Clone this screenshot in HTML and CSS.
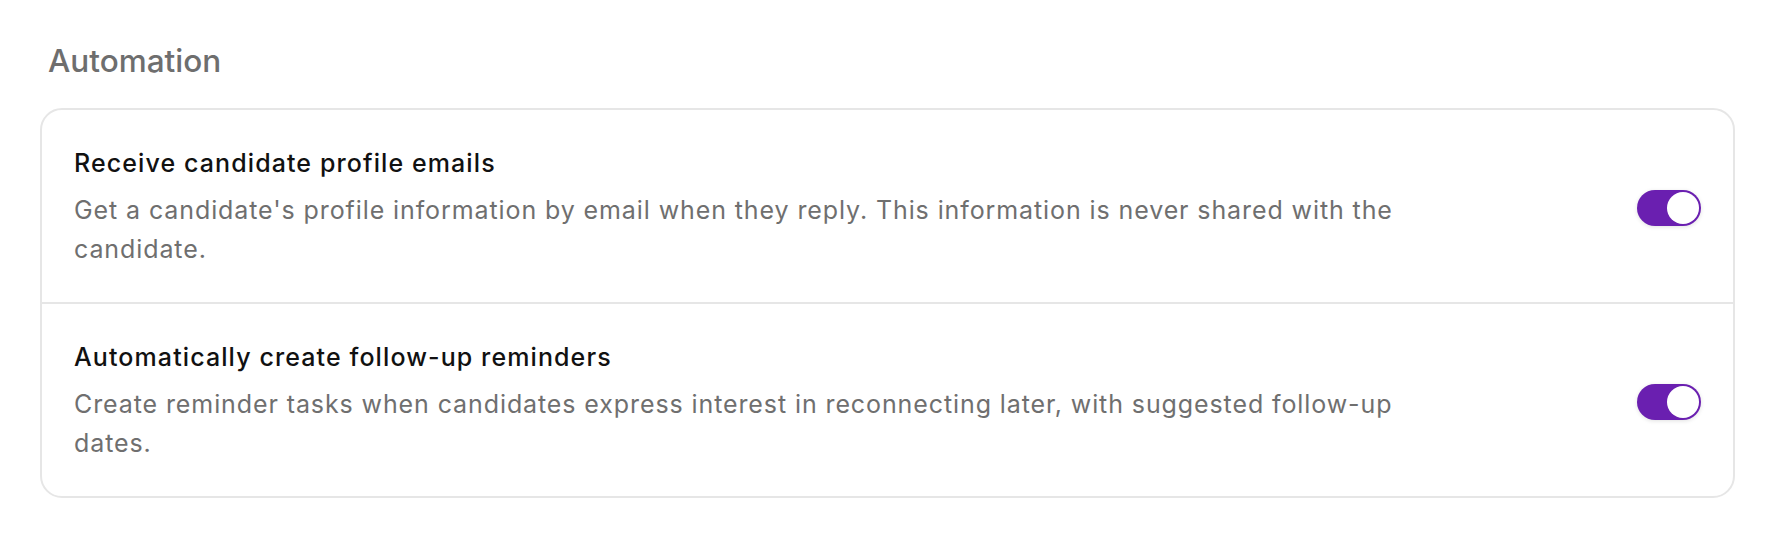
FILE: index.html
```html
<!DOCTYPE html>
<html lang="en">
<head>
    <meta charset="UTF-8">
    <meta name="viewport" content="width=device-width, initial-scale=1.0">
    <title>Automation settings</title>
    <link rel="stylesheet" href="styles.css">
</head>
<body>
    <div class="settings">
        <h2 class="section-title">Automation</h2>
        <div class="card">
            <div class="setting-row">
                <div class="setting-text">
                    <h3>Receive candidate profile emails</h3>
                    <p>Get a candidate's profile information by email when they reply. This information is never shared with the candidate.</p>
                </div>
                <label class="toggle">
                    <input type="checkbox" checked>
                    <span class="slider"></span>
                </label>
            </div>
            <div class="setting-row">
                <div class="setting-text">
                    <h3>Automatically create follow-up reminders</h3>
                    <p>Create reminder tasks when candidates express interest in reconnecting later, with suggested follow-up dates.</p>
                </div>
                <label class="toggle">
                    <input type="checkbox" checked>
                    <span class="slider"></span>
                </label>
            </div>
        </div>
    </div>
</body>
</html>
```

FILE: styles.css
```css
body {
    font-family: Inter, "Noto Sans", Arial, sans-serif;
    margin: 0;
    padding: 0;
    background-color: #fff;
}
.settings {
    padding: 43px 33px 40px 40px;
}
.section-title {
    margin: 0 0 29px 8px;
    font-size: 31.5px;
    line-height: 36px;
    font-weight: 500;
    color: #6e6e6e;
}
.card {
    border: 2px solid #e6e6e6;
    border-radius: 22px;
    background-color: #fff;
}
.setting-row {
    display: flex;
    align-items: center;
    justify-content: space-between;
    padding: 37px 32px 33.5px;
}
.setting-row + .setting-row {
    border-top: 2px solid #e6e6e6;
}
.setting-text {
    max-width: 1366px;
}
.setting-text h3 {
    margin: 0 0 11.5px;
    font-size: 25px;
    line-height: 32px;
    letter-spacing: 1.1px;
    font-weight: 500;
    color: #111;
}
.setting-text p {
    margin: 0;
    font-size: 25px;
    line-height: 39px;
    letter-spacing: 0.9px;
    color: #6f6f6f;
}
.toggle {
    position: relative;
    flex-shrink: 0;
    width: 64px;
    height: 36px;
}
.toggle input {
    opacity: 0;
    width: 0;
    height: 0;
}
.slider {
    position: absolute;
    inset: 0;
    background-color: #6a1fb0;
    border-radius: 18px;
    box-shadow: 0 1px 4px rgba(0, 0, 0, 0.12);
    cursor: pointer;
}
.slider::before {
    content: "";
    position: absolute;
    top: 2px;
    left: 2px;
    width: 32px;
    height: 32px;
    border-radius: 50%;
    background-color: #fff;
    transition: transform 0.2s;
}
.toggle input:checked + .slider::before {
    transform: translateX(28px);
}
```
